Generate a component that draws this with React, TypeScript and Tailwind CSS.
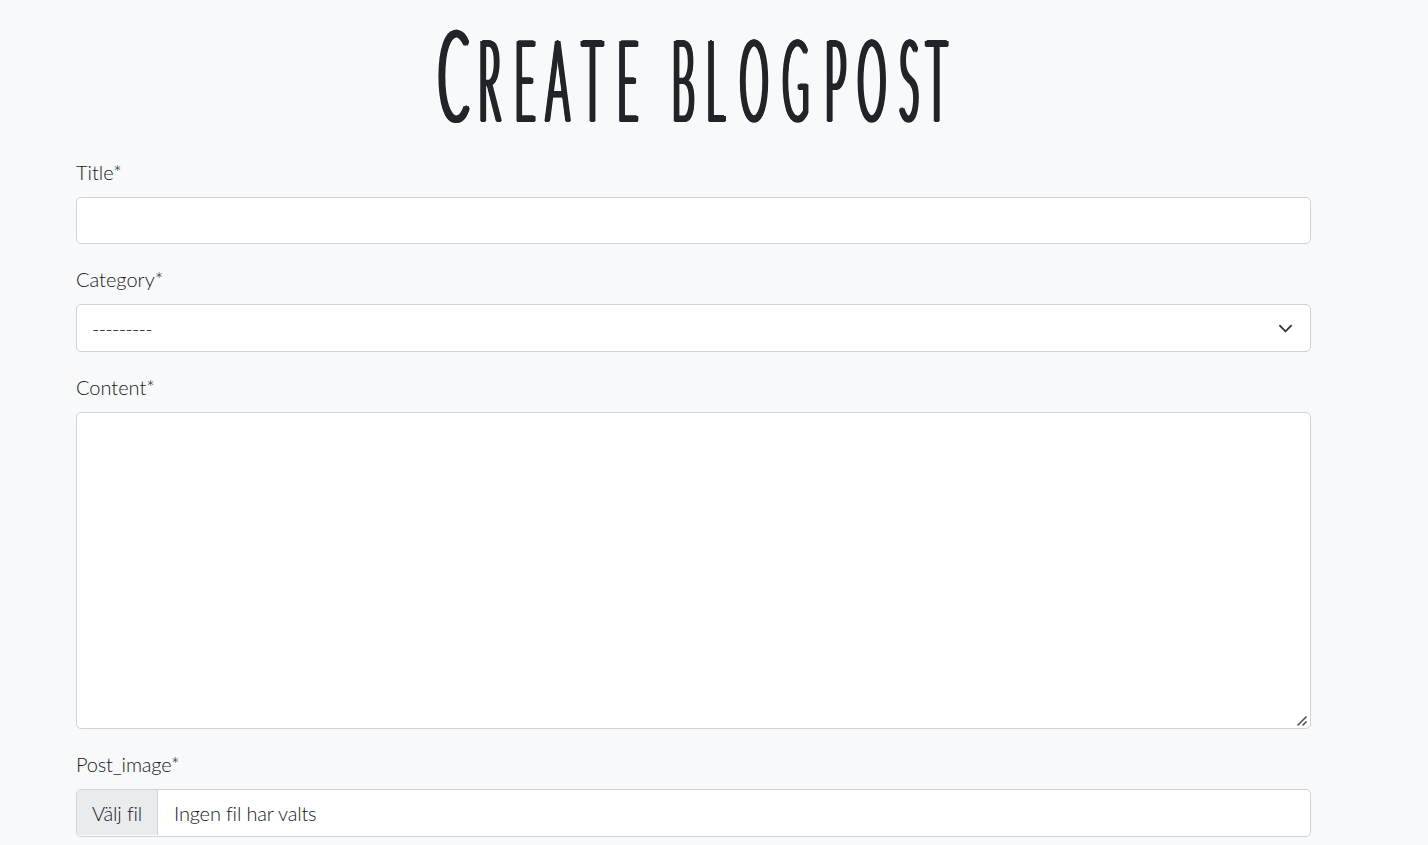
import React from "react";

const field =
  "block w-full rounded-[5px] border border-[#ced4da] bg-white px-[15px] text-[20px] text-[#15181b] outline-none";

const title: [string, string][] = [
  ["r", "tracking-[44px]"],
  ["e", "tracking-[32px]"],
  ["a", "tracking-[39px]"],
  ["t", "tracking-[45px]"],
  ["e", "tracking-[37px]"],
  [" ", "tracking-[37px]"],
  ["b", "tracking-[36px]"],
  ["l", "tracking-[47px]"],
  ["o", "tracking-[44px]"],
  ["g", "tracking-[50px]"],
  ["p", "tracking-[36px]"],
  ["o", "tracking-[42px]"],
  ["s", "tracking-[23px]"],
  ["t", "tracking-[20px]"],
];

function Label({ className = "", children }: { className?: string; children: React.ReactNode }) {
  return (
    <label className={`mb-[10px] block h-[30px] text-[20px] leading-[30px] ${className}`}>{children}</label>
  );
}

export default function App() {
  return (
    <main className="h-[845px] bg-[#f8f9fa] pl-[76px] font-['Lato',sans-serif] font-light text-[#15181b]">
      <div className="w-[1235px]">
        <h1 className="ml-[362px] h-[157px] w-[1700px] origin-left scale-x-[0.322] whitespace-pre pt-[4px] text-[112px] leading-[137px] text-[#212529] uppercase [text-shadow:-6px_0_0_#212529,-4px_-0.5px_0_#212529,-4px_0.5px_0_#212529,4px_-0.5px_0_#212529,4px_0.5px_0_#212529,0_-0.7px_0_#212529,0_0.7px_0_#212529,6px_0_0_#212529]">
          <span className="inline-block origin-left scale-x-[1.12] text-[127px] tracking-[40px]">C</span>
          {title.map(([letter, spacing], i) => (
            <span key={i} className={spacing}>{letter}</span>
          ))}
        </h1>
        <form>
          <div className="mb-[20px]">
            <Label>Title*</Label>
            <input className={`${field} h-[47px]`} />
          </div>
          <div className="mb-[20px]">
            <Label>Category*</Label>
            <div className={`${field} flex h-[48px] items-center justify-between`}>
              <span className="tracking-[-0.74px]">---------</span>
              <svg viewBox="0 0 16 16" className="mr-[2.5px] h-[15px] w-[15px]" fill="none" stroke="#343a40" strokeWidth="2" strokeLinecap="round" strokeLinejoin="round">
                <path d="m2 5 6 6 6-6" />
              </svg>
            </div>
          </div>
          <div className="mb-[20px]">
            <Label>Content*</Label>
            <div className="relative">
              <textarea className={`${field} h-[317px] resize-none`} />
              <svg className="absolute right-[3px] bottom-[2px] h-[12px] w-[12px]" viewBox="0 0 12 12" stroke="#555" strokeWidth="1.7">
                <path d="M1.5 10.5 10.5 1.5M6.5 10.5 10.5 6.5" />
              </svg>
            </div>
          </div>
          <div>
            <Label className="tracking-[-0.17px]">Post_image*</Label>
            <div className="flex h-[48px] w-full overflow-hidden rounded-[5px] border border-[#ced4da] bg-white text-[20px] leading-[46px] tracking-[-0.17px]">
              <span className="h-[45px] w-[81px] border-r border-[#ced4da] bg-[#e9ecef] pl-[15px]">Välj fil</span>
              <span className="pl-[16px]">Ingen fil har valts</span>
            </div>
          </div>
        </form>
      </div>
    </main>
  );
}
